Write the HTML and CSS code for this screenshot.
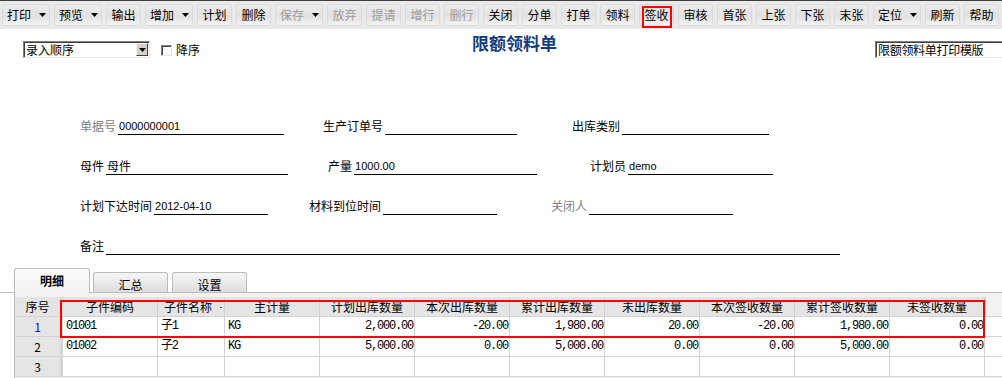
FILE: index.html
```html
<!DOCTYPE html>
<html lang="zh-CN">
<head>
<meta charset="utf-8">
<title>限额领料单</title>
<link rel="stylesheet" href="styles.css">
</head>
<body>
<div class="toolbar">
  <div class="tb dd">打印<svg class="caret" viewBox="0 0 7 4" width="7" height="4"><polygon points="0,0 7,0 3.5,4"/></svg></div>
  <div class="tb dd">预览<svg class="caret" viewBox="0 0 7 4" width="7" height="4"><polygon points="0,0 7,0 3.5,4"/></svg></div>
  <div class="tb">输出</div>
  <div class="tb dd">增加<svg class="caret" viewBox="0 0 7 4" width="7" height="4"><polygon points="0,0 7,0 3.5,4"/></svg></div>
  <div class="tb">计划</div>
  <div class="tb">删除</div>
  <div class="tb dd off">保存<svg class="caret" viewBox="0 0 7 4" width="7" height="4"><polygon points="0,0 7,0 3.5,4"/></svg></div>
  <div class="tb off">放弃</div>
  <div class="tb off">提请</div>
  <div class="tb off">增行</div>
  <div class="tb off">删行</div>
  <div class="tb">关闭</div>
  <div class="tb">分单</div>
  <div class="tb">打单</div>
  <div class="tb">领料</div>
  <div class="tb marked">签收</div>
  <div class="tb">审核</div>
  <div class="tb">首张</div>
  <div class="tb">上张</div>
  <div class="tb">下张</div>
  <div class="tb">末张</div>
  <div class="tb dd">定位<svg class="caret" viewBox="0 0 7 4" width="7" height="4"><polygon points="0,0 7,0 3.5,4"/></svg></div>
  <div class="tb">刷新</div>
  <div class="tb">帮助</div>
</div>

<div class="topbar">
  <div class="combo sort">
    <span class="combo-text">录入顺序</span>
    <span class="combo-btn"><svg viewBox="0 0 7 4" width="7" height="4"><polygon points="0,0 7,0 3.5,4"/></svg></span>
  </div>
  <span class="chk"></span>
  <span class="chk-label">降序</span>
  <h1 class="title">限额领料单</h1>
  <div class="combo tpl"><span class="combo-text">限额领料单打印模版</span></div>
</div>

<div class="form">
  <div class="frow">
    <div class="field"><span class="lbl dim">单据号</span><span class="line w166">0000000001</span></div>
    <div class="field ml39"><span class="lbl">生产订单号</span><span class="line w132"></span></div>
    <div class="field ml55"><span class="lbl">出库类别</span><span class="line w147"></span></div>
  </div>
  <div class="frow">
    <div class="field"><span class="lbl">母件</span><span class="line w182 cjk">母件</span></div>
    <div class="field ml40"><span class="lbl">产量</span><span class="line w183">1000.00</span></div>
    <div class="field ml53"><span class="lbl">计划员</span><span class="line w145">demo</span></div>
  </div>
  <div class="frow">
    <div class="field"><span class="lbl">计划下达时间</span><span class="line w114">2012-04-10</span></div>
    <div class="field ml41"><span class="lbl">材料到位时间</span><span class="line w114"></span></div>
    <div class="field ml54"><span class="lbl dim">关闭人</span><span class="line w144"></span></div>
  </div>
  <div class="frow">
    <div class="field"><span class="lbl">备注</span><span class="line w734"></span></div>
  </div>
</div>

<div class="tabs">
  <div class="tab active">明细</div>
  <div class="tab t2">汇总</div>
  <div class="tab t3">设置</div>
</div>

<div class="panel">
  <div class="grid">
    <div class="grow head">
      <div class="c rn h">序号</div>
      <div class="c h">子件编码</div>
      <div class="c h sorted">子件名称</div>
      <div class="c h">主计量</div>
      <div class="c h">计划出库数量</div>
      <div class="c h">本次出库数量</div>
      <div class="c h">累计出库数量</div>
      <div class="c h">未出库数量</div>
      <div class="c h">本次签收数量</div>
      <div class="c h">累计签收数量</div>
      <div class="c h">未签收数量</div>
      <div class="c fill h-fill"></div>
    </div>
    <div class="grow">
      <div class="c rn cur">1</div>
      <div class="c d">01001</div>
      <div class="c d">子1</div>
      <div class="c d">KG</div>
      <div class="c d n">2,000.00</div>
      <div class="c d n">-20.00</div>
      <div class="c d n">1,980.00</div>
      <div class="c d n">20.00</div>
      <div class="c d n">-20.00</div>
      <div class="c d n">1,980.00</div>
      <div class="c d n">0.00</div>
      <div class="c fill"></div>
    </div>
    <div class="grow">
      <div class="c rn">2</div>
      <div class="c d">01002</div>
      <div class="c d">子2</div>
      <div class="c d">KG</div>
      <div class="c d n">5,000.00</div>
      <div class="c d n">0.00</div>
      <div class="c d n">5,000.00</div>
      <div class="c d n">0.00</div>
      <div class="c d n">0.00</div>
      <div class="c d n">5,000.00</div>
      <div class="c d n">0.00</div>
      <div class="c fill"></div>
    </div>
    <div class="grow">
      <div class="c rn">3</div>
      <div class="c d"></div>
      <div class="c d"></div>
      <div class="c d"></div>
      <div class="c d n"></div>
      <div class="c d n"></div>
      <div class="c d n"></div>
      <div class="c d n"></div>
      <div class="c d n"></div>
      <div class="c d n"></div>
      <div class="c d n"></div>
      <div class="c fill"></div>
    </div>
    <div class="mark"></div>
  </div>
</div>
</body>
</html>
```

FILE: styles.css
```css
* { box-sizing: border-box; }
html, body { margin: 0; padding: 0; }
body {
  width: 1002px;
  height: 378px;
  overflow: hidden;
  background: #fff;
  color: #000;
  font-family: "Noto Sans CJK SC", "Noto Sans", sans-serif;
  font-size: 12px;
}

/* ---------- toolbar ---------- */
.toolbar {
  display: flex;
  gap: 4px;
  height: 29px;
  padding: 3px 2px 0;
  border-top: 1px solid #3f3f3f;
  background: #e9e9e9;
}
.tb {
  position: relative;
  flex: none;
  display: flex;
  align-items: center;
  justify-content: center;
  width: 35px;
  height: 22px;
  border: 1px solid #dadada;
  border-radius: 3px;
  background: linear-gradient(#ececec, #e1e1e1 55%, #f3f3f3);
  line-height: 12px;
  white-space: nowrap;
}
.tb.dd {
  width: 48px;
  justify-content: space-between;
  padding: 0 3px 0 4px;
}
.tb.off { color: #9b9b9b; }
.caret { fill: #000; flex: none; }
.tb.marked::after {
  content: "";
  position: absolute;
  left: 2px;
  right: 1px;
  top: 1px;
  bottom: -3px;
  border: 2px solid #f00;
}

/* ---------- top bar ---------- */
.topbar {
  display: flex;
  align-items: flex-start;
  height: 31px;
}
.combo {
  display: flex;
  align-items: center;
  height: 17px;
  border: 1px solid;
  border-color: #808080 #e4e4e4 #e4e4e4 #808080;
  box-shadow: inset 1px 1px 0 #404040;
  background: #fff;
}
.combo-text {
  flex: 1;
  padding-left: 2px;
  line-height: 15px;
  white-space: nowrap;
}
.combo.sort {
  margin: 12px 0 0 23px;
  width: 127px;
}
.combo-btn {
  display: flex;
  align-items: center;
  justify-content: center;
  width: 12px;
  height: 13px;
  margin-right: 1px;
  background: #d4d0c8;
  border: 1px solid;
  border-color: #f4f4f4 #404040 #404040 #f4f4f4;
}
.combo-btn svg { fill: #000; }
.chk {
  margin: 16px 0 0 11px;
  width: 11px;
  height: 11px;
  border: 1px solid;
  border-color: #808080 #e4e4e4 #e4e4e4 #808080;
  box-shadow: inset 1px 1px 0 #404040;
  background: #fff;
}
.chk-label {
  margin: 15px 0 0 4px;
  line-height: 12px;
}
.title {
  margin: 5px 0 0 272px;
  font-size: 17px;
  line-height: 17px;
  font-weight: bold;
  color: #133d7c;
}
.combo.tpl {
  margin: 12px 0 0 auto;
  width: 127px;
  border-right: none;
}
.combo.tpl .combo-text { letter-spacing: -0.3px; }

/* ---------- form ---------- */
.form { padding-top: 55px; }
.frow {
  display: flex;
  align-items: flex-end;
  height: 20px;
  padding-left: 80px;
}
.frow + .frow { margin-top: 20px; }
.field {
  display: flex;
  align-items: flex-end;
  gap: 2px;
}
.lbl {
  line-height: 14px;
  margin-bottom: 2px;
  white-space: nowrap;
}
.lbl.dim { color: #808080; }
.line {
  height: 16px;
  border-bottom: 1px solid #000;
  padding-left: 1px;
  font-family: "Liberation Sans", Arial, sans-serif;
  font-size: 11px;
  line-height: 15px;
  white-space: nowrap;
}
.line.cjk {
  font-family: "Noto Sans CJK SC", sans-serif;
  font-size: 12px;
  line-height: 13px;
}
.ml39 { margin-left: 39px; }
.ml40 { margin-left: 40px; }
.ml41 { margin-left: 41px; }
.ml53 { margin-left: 53px; }
.ml54 { margin-left: 54px; }
.ml55 { margin-left: 55px; }
.w114 { width: 114px; }
.w132 { width: 132px; }
.w144 { width: 144px; }
.w145 { width: 145px; }
.w147 { width: 147px; }
.w166 { width: 166px; }
.w182 { width: 182px; }
.w183 { width: 183px; }
.w734 { width: 734px; }

/* ---------- tabs ---------- */
.tabs {
  display: flex;
  align-items: flex-end;
  height: 25px;
  margin-top: 13px;
  padding-left: 14px;
  border-bottom: 1px solid #bcbcbc;
}
.tab {
  width: 75px;
  height: 20px;
  padding-top: 6px;
  border: 1px solid #bcbcbc;
  border-bottom: none;
  border-radius: 3px 3px 0 0;
  background: linear-gradient(#f6f6f6, #dedede);
  text-align: center;
  line-height: 12px;
}
.tab.active {
  width: 76px;
  height: 25px;
  margin-bottom: -1px;
  padding-top: 6px;
  background: linear-gradient(#fbfbfb, #f2f2f2);
  font-weight: bold;
}
.tab.t2 { margin-left: 3px; }
.tab.t3 { margin-left: 4px; }

/* ---------- grid ---------- */
.panel {
  height: 85px;
  margin-left: 14px;
  padding-top: 4px;
  border-left: 1px solid #bcbcbc;
  background: #f2f2f2;
}
.grid { position: relative; }
.grow {
  display: grid;
  grid-template-columns: 48px 95px 67px 95px repeat(7, 95px) 1fr;
  height: 20px;
}
.c {
  border-right: 1px solid #d3d3d3;
  border-bottom: 1px solid #d3d3d3;
  padding: 0 3px;
  line-height: 19px;
  white-space: nowrap;
  overflow: hidden;
  background: #fff;
}
.h {
  background: #e5e5e5;
  text-align: center;
  padding: 0;
}
.sorted {
  position: relative;
  padding-right: 6px;
}
.sorted::after {
  content: "";
  position: absolute;
  right: 2px;
  top: 10px;
  width: 2px;
  height: 1px;
  background: #555;
}
.rn {
  background: #e5e5e5;
  border-right: 3px solid #d6d6d6;
  text-align: center;
  padding: 0;
}
.rn.cur { color: #0000ff; }
.d {
  font-family: "Liberation Mono", "Noto Sans CJK SC", monospace;
  letter-spacing: -1.2px;
}
.n {
  text-align: right;
  padding-right: 1px;
}
.fill { border-right: none; }
.h-fill { background: #f2f2f2; border-left: 1px solid #d3d3d3; }
.mark {
  position: absolute;
  left: 45px;
  top: 3px;
  width: 925px;
  height: 38px;
  border: 2px solid #f00;
  pointer-events: none;
}
```
